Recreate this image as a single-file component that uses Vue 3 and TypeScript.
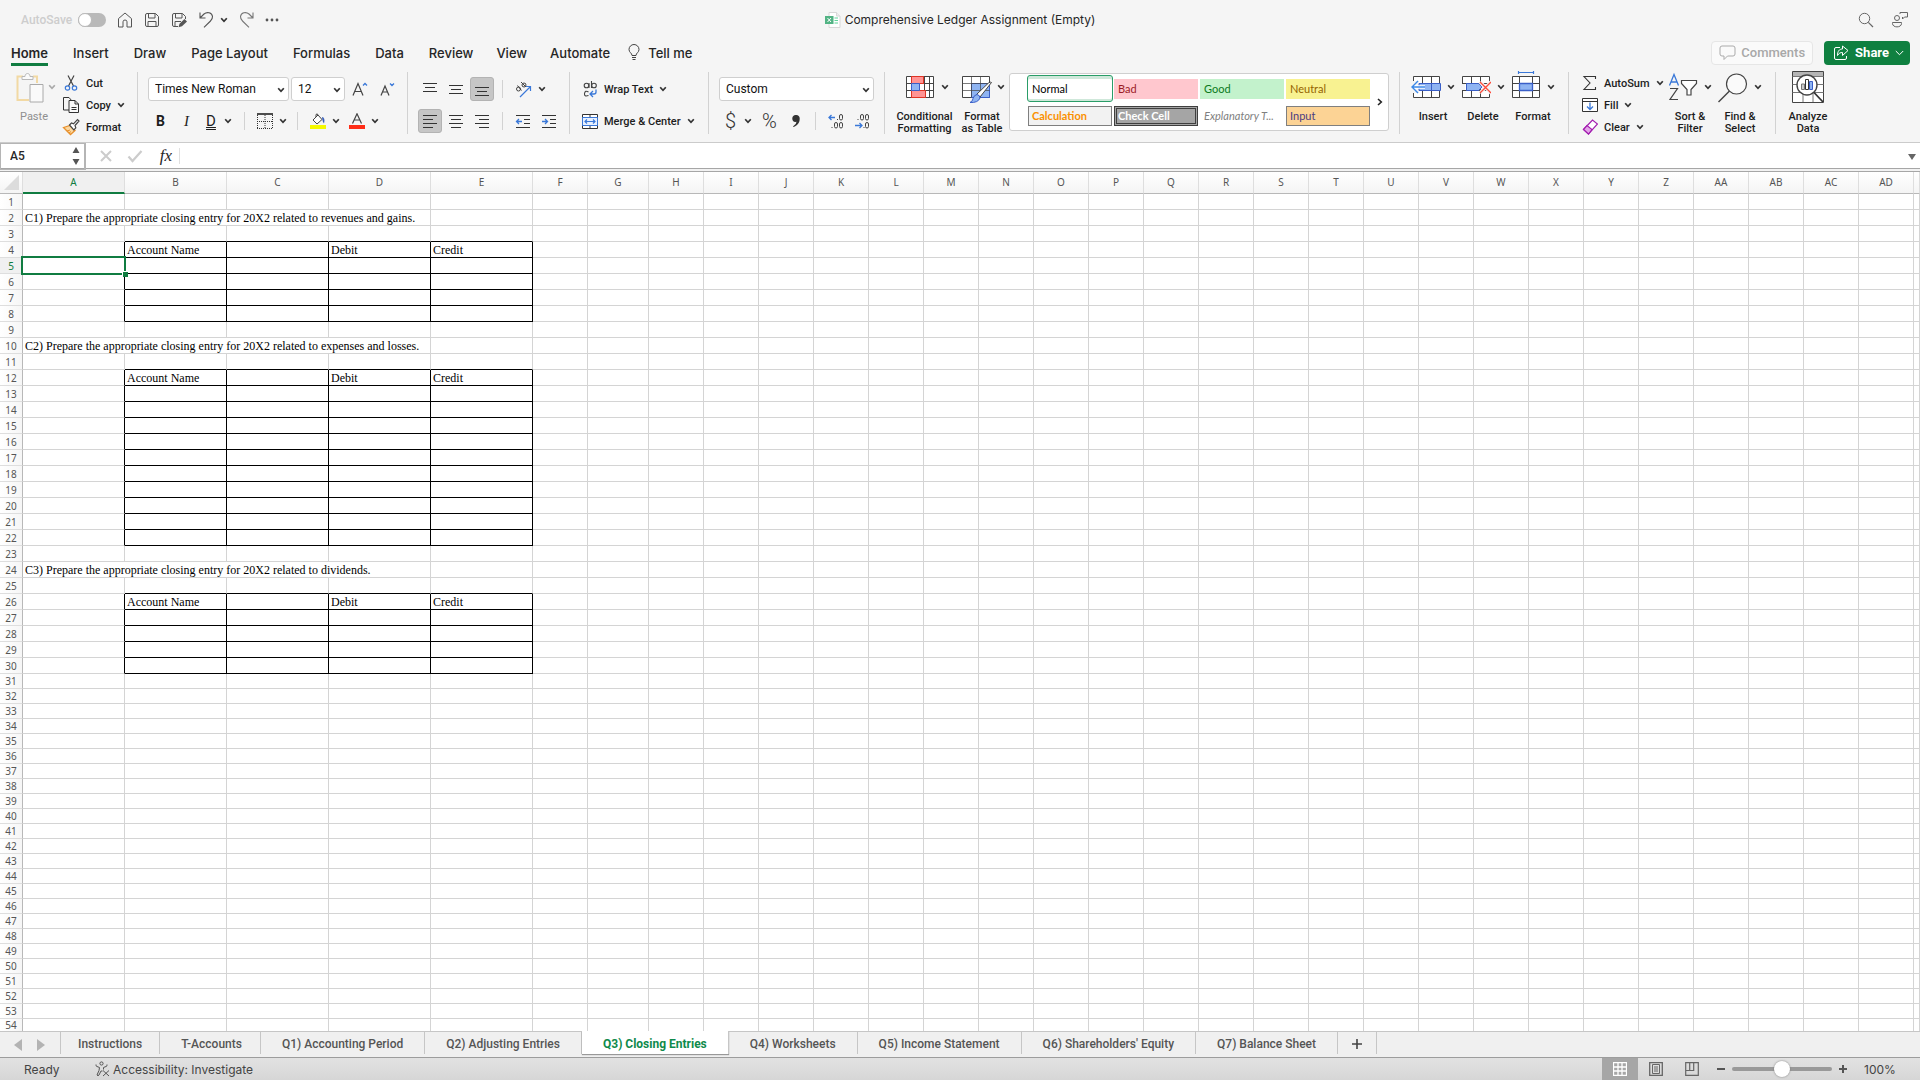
<script setup lang="ts">
import { h, ref } from 'vue'

const Chevron = () =>
  h('svg', { class: 'chev', width: 8, height: 6, viewBox: '0 0 8 6', 'aria-hidden': 'true' }, [
    h('path', { d: 'M1.2 1.2 4 4.3 6.8 1.2', fill: 'none', stroke: 'currentColor', 'stroke-width': 1.7 }),
  ])

const menus = ['Home', 'Insert', 'Draw', 'Page Layout', 'Formulas', 'Data', 'Review', 'View', 'Automate']

const cellStyles = [
  { name: 'Normal', cls: 'normal' },
  { name: 'Bad', cls: 'bad' },
  { name: 'Good', cls: 'good' },
  { name: 'Neutral', cls: 'neutral' },
  { name: 'Calculation', cls: 'calculation' },
  { name: 'Check Cell', cls: 'check-cell' },
  { name: 'Explanatory T...', cls: 'explanatory' },
  { name: 'Input', cls: 'input-style' },
]

const sheets = [
  'Instructions',
  'T-Accounts',
  'Q1) Accounting Period',
  'Q2) Adjusting Entries',
  'Q3) Closing Entries',
  'Q4) Worksheets',
  'Q5) Income Statement',
  "Q6) Shareholders' Equity",
  'Q7) Balance Sheet',
]
const activeSheet = ref('Q3) Closing Entries')

function columnName(i: number): string {
  return i < 26 ? String.fromCharCode(65 + i) : 'A' + String.fromCharCode(65 + i - 26)
}
const columns = Array.from({ length: 31 }, (_, i) => columnName(i))

function columnClass(i: number): string {
  if (i < 5) return 'col-wide'
  if (i === 6) return 'col-mid'
  return i < 30 ? 'col-std' : 'col-rest'
}

const prompts: Record<number, string> = {
  2: 'C1) Prepare the appropriate closing entry for 20X2 related to revenues and gains.',
  10: 'C2) Prepare the appropriate closing entry for 20X2 related to expenses and losses.',
  24: 'C3) Prepare the appropriate closing entry for 20X2 related to dividends.',
}
const tables: [number, number][] = [[4, 8], [12, 22], [26, 30]]
const headings: Record<number, string> = { 1: 'Account Name', 3: 'Debit', 4: 'Credit' }

interface Cell {
  key: string
  span: number
  text: string
  inkRight: boolean
  inkBottom: boolean
  selected: boolean
}

const inTable = (r: number) => tables.some(([a, b]) => r >= a && r <= b)
const isHeading = (r: number) => tables.some(([a]) => a === r)

function buildRow(r: number): Cell[] {
  const cells: Cell[] = []
  for (let c = 0; c < columns.length; c++) {
    const span = c === 0 && prompts[r] ? 4 : 1
    cells.push({
      key: columns[c] + r,
      span,
      text: c === 0 ? prompts[r] ?? '' : isHeading(r) ? headings[c] ?? '' : '',
      inkRight: inTable(r) && c <= 4,
      inkBottom: c >= 1 && c <= 4 && (inTable(r) || inTable(r + 1)),
      selected: r === 5 && c === 0,
    })
    c += span - 1
  }
  return cells
}
const rows = Array.from({ length: 54 }, (_, i) => ({ n: i + 1, cells: buildRow(i + 1) }))

const zoomLevel = ref(50)
</script>

<template>
  <div class="app">
    <header class="titlebar">
      <div class="quick">
        <label class="autosave">AutoSave <input type="checkbox" role="switch" disabled /></label>
        <button class="q home" aria-label="Home">
          <svg width="16" height="16" viewBox="0 0 16 16"><path d="M1.5 6.6 8 1l6.5 5.6V15H10V9.8Q10 8 8 8T6 9.8V15H1.5Z" fill="none" stroke="#555" stroke-linejoin="round" /></svg>
        </button>
        <button class="q" aria-label="Save">
          <svg width="16" height="16" viewBox="0 0 16 16"><path d="M3 1.5h8.5l3 3V13a1.5 1.5 0 0 1-1.5 1.5H3A1.5 1.5 0 0 1 1.5 13V3A1.5 1.5 0 0 1 3 1.5ZM4.500 1.500V6h6.500V1.500M4 14.500V9.500h8v5" fill="none" stroke="#555" /></svg>
        </button>
        <button class="q" aria-label="Save as">
          <svg width="17" height="16" viewBox="0 0 17 16"><path d="M7 14.500H3A1.500 1.500 0 0 1 1.500 13V3A1.500 1.500 0 0 1 3 1.500h8.500l3 3V7M4.500 1.500V6h6.500V1.500M4 14.500V9.500h6" fill="none" stroke="#555" /><path d="m7.500 15.200 1-3.500 5-4.700 2.500 2.500-5 4.700Z" fill="#555" /></svg>
        </button>
        <button class="q undo" aria-label="Undo">
          <svg width="15" height="17" viewBox="0 0 15 17"><path d="M1 1.500V7h5.500M1.500 6.500 5 3C8 .5 13 1.500 13.500 5.500c.2 2-.7 3-2 4.500L5 16.300" fill="none" stroke="#555" stroke-width="1.100" /></svg>
          <Chevron />
        </button>
        <button class="q" aria-label="Redo">
          <svg width="15" height="17" viewBox="0 0 15 17"><path d="M14 1.500V7H8.500M13.500 6.500 10 3C7 .5 2 1.500 1.500 5.500c-.2 2 .7 3 2 4.500l6.500 6.300" fill="none" stroke="#777" stroke-width="1.100" /></svg>
        </button>
        <button class="q" aria-label="More">
          <svg width="14" height="4" viewBox="0 0 14 4"><g fill="#555"><circle cx="2" cy="2" r="1.400" /><circle cx="7" cy="2" r="1.400" /><circle cx="12" cy="2" r="1.400" /></g></svg>
        </button>
      </div>
      <h1 class="doc">
        <svg width="16" height="16" viewBox="0 0 16 16"><path d="M4 .5h7.500L15 4v11.500H4Z" fill="#fff" stroke="#d8d8d8" /><path d="M11.500.5V4H15" fill="#eee" stroke="#d8d8d8" /><path d="M9.500 6h3.500M9.500 8.500h3.500M9.500 11h3.500" stroke="#5fd39a" /><rect y="4" width="8.500" height="8" fill="#52b384" /><path d="m2.500 6 3.500 4M6 6l-3.500 4" stroke="#fff" /></svg>
        Comprehensive Ledger Assignment (Empty)
      </h1>
      <div class="title-right">
        <button class="q" aria-label="Search">
          <svg width="16" height="16" viewBox="0 0 16 16"><circle cx="6.500" cy="6.500" r="5.200" fill="none" stroke="#666" /><path d="m10.300 10.300 4.700 4.700" stroke="#666" stroke-width="1.200" /></svg>
        </button>
        <button class="q" aria-label="Presence">
          <svg width="18" height="17" viewBox="0 0 18 17"><g fill="none" stroke="#666"><circle cx="6" cy="7" r="2.500" /><path d="M1.500 11.500h9v1c0 4.500-9 4.500-9 0ZM9 3V1.500h7.500V6h-3l-2 2V6" stroke-linejoin="round" /></g></svg>
        </button>
      </div>
    </header>

    <nav class="menubar" aria-label="Ribbon tabs">
      <a v-for="m in menus" :key="m" href="#" :class="{ active: m === 'Home' }">{{ m }}</a>
      <button class="tellme">
        <svg width="12" height="17" viewBox="0 0 12 17"><g fill="none" stroke="#444"><path d="M4 11.500C4 9 1 8.500 1 5.500a5 5 0 0 1 10 0C11 8.500 8 9 8 11.500ZM4 13.500h4M4.500 15.500h3" /></g></svg>
        Tell me
      </button>
      <span class="grow"></span>
      <button class="comments" disabled>
        <svg width="17" height="16" viewBox="0 0 17 16"><path d="M3 1h11a2 2 0 0 1 2 2v6a2 2 0 0 1-2 2H8.500L5 14.500V11H3a2 2 0 0 1-2-2V3a2 2 0 0 1 2-2Z" fill="none" stroke="#aaa" stroke-linejoin="round" /></svg>
        Comments
      </button>
      <button class="share">
        <svg width="16" height="16" viewBox="0 0 16 16"><g fill="none" stroke="#fff" stroke-linejoin="round"><path d="M7 2.500H3A1.500 1.500 0 0 0 1.500 4v9A1.500 1.500 0 0 0 3 14.500h9a1.500 1.500 0 0 0 1.500-1.500v-2" /><path d="M9.500 1v3C6 4 4.500 6.500 4.500 10.500 6 8 7.500 7.500 9.500 7.500v3L15 5.500Z" /></g></svg>
        Share
        <svg width="9" height="6" viewBox="0 0 9 6"><path d="m.8 1 3.700 3.700L8.200 1" fill="none" stroke="#fff" /></svg>
      </button>
    </nav>

    <div class="ribbon" role="toolbar">
      <section class="group g-clip">
        <button class="big paste" disabled>
          <span class="pic"><svg width="28" height="31" viewBox="0 0 28 31"><path d="M7 4.500H1.500V28H13M17 4.500h4V11" fill="none" stroke="#f2d9a4" stroke-width="2" /><path d="M6 7.500V4.500h3c0-4 5-4 5 0h3v3Z" fill="#fafafa" stroke="#b8b8b8" /><path d="M14 12.500h13v17.500H14Z" fill="#fafafa" stroke="#aaa" /></svg><Chevron /></span>
          <span>Paste</span>
        </button>
        <div class="stack">
          <button>
            <svg width="18" height="18" viewBox="0 0 18 18"><path d="M6 1.500 11.500 12M12 1.500 6.500 12" stroke="#444" stroke-width="1.200" /><g fill="none" stroke="#3a78d8" stroke-width="1.200"><circle cx="5.500" cy="14" r="2.200" /><circle cx="12.500" cy="14" r="2.200" /></g></svg>
            Cut
          </button>
          <button>
            <svg width="18" height="18" viewBox="0 0 18 18"><path d="M7 14H1.500V1.500H7L10 5" fill="none" stroke="#333" /><path d="M7 4.500h6l3.500 3.500v8.500H7ZM13 4.500V8h3.500M9.500 11.500h5M9.500 13.500h5" fill="#fafafa" stroke="#333" /></svg>
            Copy <Chevron />
          </button>
          <button>
            <svg width="18" height="18" viewBox="0 0 18 18"><path d="m1.500 9.500 6.500-2 5 5-4.500 4Z" fill="#fbd7a0" stroke="#e8912d" stroke-width="1.300" /><path d="m5 13 3-1M7 15l2-1.500" stroke="#e8912d" /><path d="m7.500 7 2-2 2 .8L15.500 1.500l1.500 1.500L13 7.500l.8 2.300-2 2Z" fill="#fff" stroke="#444" stroke-width="1.200" /></svg>
            Format
          </button>
        </div>
      </section>
      <i class="sep"></i>

      <section class="group g-font">
        <div class="line">
          <span class="pick font-name"><select aria-label="Font"><option>Times New Roman</option></select><Chevron /></span>
          <span class="pick font-size"><select aria-label="Font size"><option>12</option></select><Chevron /></span>
          <button class="grow-font" aria-label="Increase font size"><svg width="16" height="16" viewBox="0 0 16 16"><path d="M1 14.500 6 2.500l5 12M2.800 10.500h6.400" fill="none" stroke="#444" stroke-width="1.200" /><path d="m11 4.500 2-2 2 2" fill="none" stroke="#3a78d8" stroke-width="1.300" /></svg></button>
          <button class="shrink-font" aria-label="Decrease font size"><svg width="16" height="16" viewBox="0 0 16 16"><path d="M1 14.500 5 5l4 9.500M2.500 11h5" fill="none" stroke="#444" stroke-width="1.200" /><path d="m10 2.500 2 2 2-2" fill="none" stroke="#3a78d8" stroke-width="1.300" /></svg></button>
        </div>
        <div class="line low">
          <button class="letter bold">B</button>
          <button class="letter ital">I</button>
          <button class="letter dbl">D <Chevron /></button>
          <i class="minisep"></i>
          <button class="pic-btn" aria-label="Borders"><svg width="16" height="16" viewBox="0 0 16 16"><path d="M0 1h16" stroke="#222" stroke-width="1.600" /><path d="M.5 2v14M15.500 2v14M0 15.500h16M8 2v14M0 8.500h16" fill="none" stroke="#333" stroke-dasharray="1 1" /></svg><Chevron /></button>
          <i class="minisep"></i>
          <button class="pic-btn" aria-label="Fill colour"><svg width="16" height="16" viewBox="0 0 16 16"><path d="m3 7 5-5 4 4.500-5 4.500ZM6 4V1.500q1.500-1.500 2 .5" fill="#fff" stroke="#444" /><path d="M12 4q3.500.5 2 6.500Q12.500 9 12 4Z" fill="#3a5fb8" /><path d="M0 12h16v4H0Z" fill="#f5f900" /></svg><Chevron /></button>
          <button class="pic-btn" aria-label="Font colour"><svg width="16" height="16" viewBox="0 0 16 16"><path d="M3.500 10.500 8 .8l4.500 9.700M5.200 7h5.600" fill="none" stroke="#444" stroke-width="1.200" /><path d="M0 12h16v4H0Z" fill="#ff2d17" /></svg><Chevron /></button>
        </div>
      </section>
      <i class="sep"></i>

      <section class="group g-align">
        <div class="line">
          <button class="tile" aria-label="Top align"><svg width="14" height="16" viewBox="0 0 14 16"><path d="M0 2.500h14M2 6.500h10M0 10.500h14" stroke="#333" /></svg></button>
          <button class="tile" aria-label="Middle align"><svg width="14" height="16" viewBox="0 0 14 16"><path d="M0 4.500h14M2 8.500h10M0 12.500h14" stroke="#333" /></svg></button>
          <button class="tile on" aria-label="Bottom align"><svg width="14" height="16" viewBox="0 0 14 16"><path d="M0 6.500h14M2 10.500h10M0 14.500h14" stroke="#333" /></svg></button>
          <i class="minisep"></i>
          <button class="pic-btn" aria-label="Orientation"><svg width="17" height="17" viewBox="0 0 17 17"><g fill="none" stroke="#444"><circle cx="3.500" cy="8" r="2" /><path d="m2.500 4.500 4 5M6 1l5 5" /><circle cx="9" cy="4" r="2" /></g><path d="M5 16 15.500 5.500M11 5.500h4.500V10" fill="none" stroke="#3a78d8" stroke-width="1.200" /></svg><Chevron /></button>
        </div>
        <div class="line low">
          <button class="tile on" aria-label="Align left"><svg width="14" height="16" viewBox="0 0 14 16"><path d="M0 2.500h14M0 6.500h10M0 10.500h14M0 14.500h10" stroke="#333" /></svg></button>
          <button class="tile" aria-label="Centre"><svg width="14" height="16" viewBox="0 0 14 16"><path d="M0 2.500h14M2 6.500h10M0 10.500h14M2 14.500h10" stroke="#333" /></svg></button>
          <button class="tile" aria-label="Align right"><svg width="14" height="16" viewBox="0 0 14 16"><path d="M0 2.500h14M4 6.500h10M0 10.500h14M4 14.500h10" stroke="#333" /></svg></button>
          <i class="minisep"></i>
          <button class="tile" aria-label="Decrease indent"><svg width="16" height="16" viewBox="0 0 16 16"><path d="M1 2.500h14M9 6.500h6M9 10.500h6M1 14.500h14" stroke="#333" /><path d="M7 8.500H1.500M4 6 1.500 8.500 4 11" fill="none" stroke="#3a78d8" stroke-width="1.300" /></svg></button>
          <button class="tile" aria-label="Increase indent"><svg width="16" height="16" viewBox="0 0 16 16"><path d="M1 2.500h14M9 6.500h6M9 10.500h6M1 14.500h14" stroke="#333" /><path d="M1 8.500h5.500M4 6l2.500 2.500L4 11" fill="none" stroke="#3a78d8" stroke-width="1.300" /></svg></button>
        </div>
      </section>
      <i class="sep"></i>

      <section class="group g-wrap">
        <div class="line">
          <button class="wide">
            <svg width="16" height="18" viewBox="0 0 16 18"><g fill="none" stroke="#444" stroke-width="1.100"><circle cx="4.500" cy="5.500" r="2.300" /><path d="M7 3v5M9.500 1v7" /><circle cx="12" cy="5.500" r="2.300" /><path d="M6.500 12q-3.500-2-4 1.500t4 2" /></g><path d="M14 9.500v2.500q0 2-2 2H8.500M11 11l-3 3 3 3" fill="none" stroke="#3a78d8" stroke-width="1.300" /></svg>
            Wrap Text <Chevron />
          </button>
        </div>
        <div class="line low">
          <button class="wide">
            <svg width="16" height="16" viewBox="0 0 16 16"><path d="M.5 1.500h15v14H.5ZM8 1v3M8 13v3" fill="#fff" stroke="#333" /><path d="M.5 4.500h15v8H.5Z" fill="#e8f1ff" stroke="#3a78d8" /><path d="M3 8.500h10M5 6.500l-2 2 2 2M11 6.500l2 2-2 2" fill="none" stroke="#3a78d8" stroke-width="1.200" /></svg>
            Merge &amp; Center <Chevron />
          </button>
        </div>
      </section>
      <i class="sep"></i>

      <section class="group g-num">
        <div class="line">
          <span class="pick number"><select aria-label="Number format"><option>Custom</option></select><Chevron /></span>
        </div>
        <div class="line low">
          <button class="glyph dollar">$ <Chevron /></button>
          <button class="glyph">%</button>
          <button class="glyph comma" aria-label="Comma style"><svg width="8" height="12" viewBox="0 0 8 12"><path d="M4 0a3.500 3.500 0 0 1 3.700 3.800C7.700 8 5 11 1.500 12q-.8-.5 0-1 2.800-1.500 3-4.200Q.4 7.500.3 3.800A3.500 3.500 0 0 1 4 0Z" fill="#333" /></svg></button>
          <i class="minisep"></i>
          <button class="dec" aria-label="Increase decimal"><svg width="16" height="16" viewBox="0 0 16 16"><path d="M7 4.500H1M3.500 2 1 4.500 3.500 7" fill="none" stroke="#3a78d8" stroke-width="1.300" /><g fill="none" stroke="#444"><rect x="11.500" y="1.500" width="3" height="5.500" rx="1.500" /><rect x="6.500" y="9.500" width="3" height="5.500" rx="1.500" /><rect x="11.500" y="9.500" width="3" height="5.500" rx="1.500" /></g><path d="M3.500 14.500h1M9 6.500h1" stroke="#444" /></svg></button>
          <button class="dec" aria-label="Decrease decimal"><svg width="16" height="16" viewBox="0 0 16 16"><path d="M1 12.500h7M5.500 10 8 12.500 5.500 15" fill="none" stroke="#3a78d8" stroke-width="1.300" /><g fill="none" stroke="#444"><rect x="6.500" y="1.500" width="3" height="5.500" rx="1.500" /><rect x="11.500" y="1.500" width="3" height="5.500" rx="1.500" /><rect x="11.500" y="9.500" width="3" height="5.500" rx="1.500" /></g><path d="M3.500 6.500h1M9.500 14.500h1" stroke="#444" /></svg></button>
        </div>
      </section>
      <i class="sep"></i>

      <section class="group g-styles">
        <button class="big cond">
          <span class="pic"><svg width="30" height="32" viewBox="0 0 30 32"><path d="M1.500 5.500h27v21h-27ZM1.500 12.500h27M1.500 19.500h27M19.500 5.500v21M24.500 5.500v21" fill="#fff" stroke="#444" /><path d="M6.500 5.500h12v7h-12ZM6.500 19.500h14v7h-14Z" fill="#ff9494" stroke="#e03424" /><path d="M6.500 12.500h8v7h-8Z" fill="#8fb4f2" stroke="#3a5fc8" /></svg><Chevron /></span>
          <span>Conditional<br />Formatting</span>
        </button>
        <button class="big as-table">
          <span class="pic"><svg width="32" height="32" viewBox="0 0 32 32"><path d="M1.500 5.500h27v21h-27Z" fill="#fff" stroke="#444" /><path d="M10.500 12.500h18v14h-18Z" fill="#8fb4f2" stroke="#3a5fc8" /><path d="M1.500 12.500h27M1.500 19.500h27M10.500 5.500v21M19.500 5.500v21" stroke="#444" stroke-opacity=".7" /><path d="M30.500 11.500 19 26l-3.500-2.500L27.500 12q2-1.500 3-.5Z" fill="#fff" stroke="#444" /><path d="M16 23.500q3 .5 3 3.500-2 5-10 4.500 3-1.500 3-4 1-3.500 4-4Z" fill="#8fb4f2" stroke="#3a5fc8" /></svg><Chevron /></span>
          <span>Format<br />as Table</span>
        </button>
        <div class="gallery">
          <div class="swatches">
            <button v-for="s in cellStyles" :key="s.name" :class="['swatch', s.cls]">{{ s.name }}</button>
          </div>
          <button class="next" aria-label="More styles"><svg width="6" height="8" viewBox="0 0 6 8"><path d="m1 1 3.300 3L1 7" fill="none" stroke="#222" stroke-width="1.600" /></svg></button>
        </div>
      </section>
      <i class="sep"></i>

      <section class="group g-cells">
        <button class="big">
          <span class="pic"><svg width="30" height="32" viewBox="0 0 30 32"><path d="M2.500 5.500h26v21h-26ZM2.500 12.500h26M2.500 19.500h26M11.500 5.500v21M20.500 5.500v21" fill="#fff" stroke="#444" /><path d="M0 10h8v12H0Z" fill="#f5f5f5" /><path d="M8 12.500h21.500v7H8Z" fill="#8fb4f2" stroke="#3a5fc8" /><path d="M20.500 12.500v7" stroke="#3a5fc8" /><path d="M14 16H2" stroke="#fff" stroke-width="3.500" /><path d="M14 16H1M7 10 1 16l6 6" fill="none" stroke="#3a88e8" stroke-width="1.400" /></svg><Chevron /></span>
          <span>Insert</span>
        </button>
        <button class="big">
          <span class="pic"><svg width="30" height="32" viewBox="0 0 30 32"><path d="M1.500 5.500h27v21h-27ZM1.500 12.500h27M1.500 19.500h27M10.500 5.500v21M19.500 5.500v21" fill="#fff" stroke="#444" /><path d="M0 13h4v6H0ZM20 13h10v6H20Z" fill="#f4f4f4" /><path d="M5.500 12.500h12L21 16l-3.500 3.500h-12Z" fill="#8fb4f2" stroke="#3a5fc8" /><path d="m19 11 11 11M30 11 19 22" stroke="#f4f4f4" stroke-width="3.500" /><path d="m19 11 11 11M30 11 19 22" stroke="#ff4a3a" stroke-width="1.300" /></svg><Chevron /></span>
          <span>Delete</span>
        </button>
        <button class="big">
          <span class="pic"><svg width="30" height="32" viewBox="0 0 30 32"><path d="M1.500 5.500h27v21h-27ZM1.500 12.500h27M1.500 19.500h27M8.500 5.500v21M21.500 5.500v21" fill="#fff" stroke="#444" /><path d="M8.500 12.500h13v7h-13Z" fill="#8fb4f2" stroke="#3a5fc8" stroke-width="1.300" /><path d="M7.500 0v3M22.500 0v3M7.500 1.500h15" stroke="#3a78d8" stroke-width="1.200" /></svg><Chevron /></span>
          <span>Format</span>
        </button>
      </section>
      <i class="sep"></i>

      <section class="group g-edit">
        <div class="stack">
          <button>
            <svg width="16" height="18" viewBox="0 0 16 18"><path d="M13.500 5V2.500H2L8 9l-6 6.500h11.500V13" fill="none" stroke="#333" stroke-width="1.100" /></svg>
            AutoSum <Chevron />
          </button>
          <button>
            <svg width="16" height="18" viewBox="0 0 16 18"><path d="M.5 2.500h15v13H.5ZM.5 5.500h15" fill="#fff" stroke="#333" /><path d="M8 6.500V13M5 10.500 8 13.500l3-3" fill="none" stroke="#3a78d8" stroke-width="1.300" /></svg>
            Fill <Chevron />
          </button>
          <button>
            <svg width="16" height="18" viewBox="0 0 16 18"><path d="M1.500 11.500 10.500 2l5 4L6.500 16Z" fill="#fff" stroke="#a21caf" stroke-width="1.200" /><path d="m1.500 11.500 3.500-4 5 4L6.500 16Z" fill="#e3a5e8" stroke="#a21caf" stroke-width="1.200" /></svg>
            Clear <Chevron />
          </button>
        </div>
        <button class="big">
          <span class="pic"><svg width="30" height="32" viewBox="0 0 30 32"><path d="m1.500 14.500 4.500-11 4.500 11M3 11h6" fill="none" stroke="#3a78d8" stroke-width="1.300" /><path d="M2 17.500h7.500L2 28.500h8" fill="none" stroke="#444" stroke-width="1.200" /><path d="M13.500 9.500h15v3l-5.500 6V24h-4v-5.500l-5.500-6Z" fill="#fff" stroke="#444" stroke-width="1.200" /></svg><Chevron /></span>
          <span>Sort &amp;<br />Filter</span>
        </button>
        <button class="big">
          <span class="pic"><svg width="30" height="32" viewBox="0 0 30 32"><circle cx="18.500" cy="13" r="10" fill="#fafafa" stroke="#444" stroke-width="1.200" /><path d="M11.500 20 .5 31" stroke="#444" stroke-width="1.400" /></svg><Chevron /></span>
          <span>Find &amp;<br />Select</span>
        </button>
      </section>
      <i class="sep"></i>

      <section class="group g-analyze">
        <button class="big solo">
          <span class="pic"><svg width="32" height="32" viewBox="0 0 32 32"><path d="M.5.500h31v31H.5Z" fill="#fff" stroke="#444" /><path d="M1 1h30v4H1Z" fill="#b5b5b5" /><path d="M.5 5.500h31M.5 13.500h31M.5 21.500h31M11 5v26M21 5v26" stroke="#777" /><circle cx="15" cy="14" r="10" fill="#fff" stroke="#444" stroke-width="1.400" /><path d="M9.500 13h3v5.500h-3Z" fill="#ccc" stroke="#777" /><path d="M13.500 8.500h3v10h-3Z" fill="#fff" stroke="#333" /><path d="M17.500 10.500h3v8h-3Z" fill="#8fb4f2" stroke="#3a5fc8" /><path d="m22 21.500 9 9.500" stroke="#333" stroke-width="1.800" /></svg></span>
          <span>Analyze<br />Data</span>
        </button>
      </section>
    </div>

    <div class="formula">
      <div class="namebox">
        <input aria-label="Name box" value="A5" />
        <svg width="8" height="18" viewBox="0 0 8 18"><path d="M4 0 7.500 6h-7ZM4 18 .5 12h7Z" fill="#555" /></svg>
      </div>
      <button aria-label="Cancel" class="fb"><svg width="16" height="16" viewBox="0 0 16 16"><path d="m3 3 10 10M13 3 3 13" stroke="#ccc" stroke-width="2" /></svg></button>
      <button aria-label="Enter" class="fb"><svg width="16" height="16" viewBox="0 0 16 16"><path d="m1.500 8.500 4 4.500L14.500 3" fill="none" stroke="#ccc" stroke-width="2.200" /></svg></button>
      <button aria-label="Insert function" class="fb fx">fx</button>
      <input class="entry" aria-label="Formula" />
      <button aria-label="Expand formula bar" class="expand"><svg width="8" height="6" viewBox="0 0 8 6"><path d="M0 0h8L4 6Z" fill="#666" /></svg></button>
    </div>

    <main class="sheet">
      <table>
        <colgroup>
          <col class="col-num" />
          <col v-for="(c, i) in columns" :key="c" :class="columnClass(i)" />
        </colgroup>
        <thead>
          <tr>
            <th class="corner"><svg width="15" height="15" viewBox="0 0 15 15"><path d="M15 0v15H0Z" fill="#dcdcdc" /></svg></th>
            <th v-for="(c, i) in columns" :key="c" :class="{ current: i === 0 }" scope="col">{{ i < 30 ? c : '' }}</th>
          </tr>
        </thead>
        <tbody>
          <tr v-for="r in rows" :key="r.n" :class="{ short: r.n > 30 }">
            <th scope="row" :class="{ current: r.n === 5 }">{{ r.n }}</th>
            <td
              v-for="c in r.cells"
              :key="c.key"
              :colspan="c.span"
              :class="{ 'ink-r': c.inkRight, 'ink-b': c.inkBottom, selected: c.selected }"
            >{{ c.text }}</td>
          </tr>
        </tbody>
      </table>
    </main>

    <nav class="tabs" aria-label="Sheets">
      <div class="arrows">
        <button aria-label="Previous sheet"><svg width="8" height="12" viewBox="0 0 8 12"><path d="M8 0v12L0 6Z" fill="#b3b3b3" /></svg></button>
        <button aria-label="Next sheet"><svg width="8" height="12" viewBox="0 0 8 12"><path d="M0 0v12l8-6Z" fill="#b3b3b3" /></svg></button>
      </div>
      <button v-for="s in sheets" :key="s" :class="['tab', { active: s === activeSheet }]" @click="activeSheet = s">{{ s }}</button>
      <button class="tab add" aria-label="Add sheet"><svg width="10" height="10" viewBox="0 0 10 10"><path d="M5 0v10M0 5h10" stroke="#444" stroke-width="1.600" /></svg></button>
    </nav>

    <footer class="status">
      <span class="ready">Ready</span>
      <button class="access">
        <svg width="15" height="16" viewBox="0 0 15 16"><g fill="none" stroke="#555"><circle cx="6.500" cy="2.500" r="1.600" /><path d="M1 3.500q-.5 1.500 1 2l2.500 1-.5 3-2 4.500q1 1.500 2 0L6 10h1.500M12 3.500q.5 1.500-1 2L8.500 6.500v2" /><path d="m8 9.500 6 5.500M14 9.500 8 15" /></g></svg>
        Accessibility: Investigate
      </button>
      <span class="grow"></span>
      <button class="view on" aria-label="Normal view"><svg width="14" height="14" viewBox="0 0 14 14"><path d="M.5.500h13v13H.5ZM5 0v14M9 0v14M0 5h14M0 9h14" fill="none" stroke="#fff" stroke-width="1.300" /></svg></button>
      <button class="view" aria-label="Page layout view"><svg width="14" height="14" viewBox="0 0 14 14"><path d="M.7.700h12.600v12.600H.7Z" fill="none" stroke="#666" stroke-width="1.300" /><path d="M3.500 2.500h7v9h-7ZM5 5h4M5 7h4M5 9h4" fill="none" stroke="#666" /></svg></button>
      <button class="view" aria-label="Page break view"><svg width="14" height="14" viewBox="0 0 14 14"><path d="M.7.700h12.600v12.600H.7ZM.7 8.500h8V.7M4.700.700v7.800" fill="none" stroke="#666" stroke-width="1.200" /></svg></button>
      <button class="step" aria-label="Zoom out"><svg width="8" height="8" viewBox="0 0 8 8"><path d="M0 4h8" stroke="#555" stroke-width="2" /></svg></button>
      <input v-model="zoomLevel" type="range" min="0" max="100" aria-label="Zoom" />
      <button class="step" aria-label="Zoom in"><svg width="8" height="8" viewBox="0 0 8 8"><path d="M0 4h8M4 0v8" stroke="#555" stroke-width="2" /></svg></button>
      <output class="percent">100%</output>
    </footer>
  </div>
</template>

<style>
html,
body {
  margin: 0;
  background: #fff;
}
</style>

<style scoped>
.app {
  display: flex;
  flex-direction: column;
  height: 100vh;
  overflow: hidden;
  background: #f5f5f5;
  color: #262626;
  font-family: Roboto, 'Liberation Sans', sans-serif;
  font-size: 11px;
}
.app *,
.app *::before,
.app *::after {
  box-sizing: border-box;
}
button,
input,
select {
  margin: 0;
  padding: 0;
  border: 0;
  background: none;
  color: inherit;
  font: inherit;
}
svg {
  display: block;
  flex: none;
}
.chev {
  color: #333;
}
.grow {
  flex: 1;
}

/* Title bar */
.titlebar {
  display: grid;
  grid-template-columns: 1fr auto 1fr;
  align-items: center;
  height: 39px;
}
.quick {
  display: flex;
  align-items: center;
  gap: 11px;
  padding-left: 21px;
}
.autosave {
  display: flex;
  align-items: center;
  gap: 6px;
  color: #cdcdcd;
  font-size: 12px;
  font-weight: 500;
}
.autosave input {
  appearance: none;
  display: flex;
  width: 28px;
  height: 14px;
  border-radius: 7px;
  background: #b9b9b9;
}
.autosave input::before {
  content: '';
  width: 14px;
  height: 14px;
  border: 1px solid #b9b9b9;
  border-radius: 50%;
  background: #fff;
}
.q {
  display: flex;
  align-items: center;
  gap: 6px;
}
.doc {
  display: flex;
  align-items: center;
  gap: 4px;
  margin: 0;
  font-family: Inter, sans-serif;
  font-size: 12px;
  font-weight: 400;
}
.title-right {
  display: flex;
  justify-content: flex-end;
  gap: 17px;
  padding-right: 11px;
}

/* Ribbon tabs */
.menubar {
  display: flex;
  align-items: center;
  height: 27px;
  padding: 0 10px 0 11px;
  font-size: 13px;
  font-weight: 500;
}
.menubar a {
  height: 27px;
  margin-right: 25px;
  border-bottom: 3px solid transparent;
  color: inherit;
  font-family: Inter, sans-serif;
  line-height: 28px;
  text-decoration: none;
}
.menubar a:nth-of-type(n + 7) {
  margin-right: 23px;
}
.menubar a:last-of-type {
  margin-right: 18px;
}
.menubar a.active {
  border-color: #107c41;
  font-weight: 600;
}
.tellme {
  display: flex;
  align-items: center;
  gap: 8px;
}
.menubar .tellme {
  font-family: Inter, sans-serif;
}
.comments,
.share {
  display: flex;
  align-items: center;
  height: 24px;
  border-radius: 4px;
}
.comments {
  gap: 5px;
  margin-right: 11px;
  padding: 0 7px;
  border: 1px solid #e6e6e6;
  background: #fafafa;
  color: #a8a8a8;
}
.share {
  gap: 6px;
  padding: 0 6px 0 9px;
  background: #0f8040;
  color: #fff;
  font-weight: 700;
}

/* Ribbon */
.ribbon {
  display: flex;
  height: 77px;
  border-bottom: 1px solid #cbcbcb;
}
.group {
  flex: none;
}
.sep {
  flex: none;
  width: 1px;
  height: 62px;
  margin-top: 6px;
  background: #d2d2d2;
}
.minisep {
  flex: none;
  width: 1px;
  height: 18px;
  background: #d2d2d2;
}
.ribbon button {
  color: #1d1d1d;
  font-weight: 500;
}
.g-clip,
.g-styles,
.g-cells,
.g-edit,
.g-analyze {
  display: flex;
}
.stack {
  display: flex;
  flex-direction: column;
  padding-top: 6px;
}
.stack button {
  display: flex;
  align-items: center;
  gap: 6px;
  height: 22px;
}
.big {
  display: flex;
  flex-direction: column;
  align-items: center;
  width: 50px;
  line-height: 12px;
  white-space: nowrap;
}
.big .pic {
  display: flex;
  align-items: center;
  gap: 6px;
  height: 45px;
  padding-bottom: 6px;
  padding-top: 3px;
}
.g-clip {
  width: 137px;
}
.g-clip .stack {
  padding-left: 1px;
}
.ribbon .paste {
  align-items: flex-start;
  width: 61px;
  padding-left: 10px;
  color: #8f8f8f;
  font-weight: 400;
}
.g-clip .paste .pic {
  gap: 4px;
  padding-left: 6px;
}
.g-clip .paste .chev {
  color: #aaa;
}
.g-clip .paste > span:last-child {
  padding-left: 10px;
}
.line {
  display: flex;
  align-items: center;
  height: 24px;
  margin-top: 11px;
}
.line.low {
  margin-top: 8px;
}
.line button {
  display: flex;
  align-items: center;
  flex: none;
}
.pick {
  display: flex;
  position: relative;
  height: 24px;
  border: 1px solid #cfcfcf;
  border-radius: 3px;
  background: #fff;
}
.pick select {
  appearance: none;
  width: 100%;
  padding: 0 20px 0 6px;
  color: #111;
  font-size: 12px;
}
.pick .chev {
  position: absolute;
  top: 9px;
  right: 3px;
  pointer-events: none;
}
.g-font {
  width: 269px;
  padding-left: 10px;
}
.font-name {
  width: 141px;
  margin-right: 2px;
}
.font-size {
  width: 54px;
  margin-right: 7px;
}
.grow-font {
  margin-right: 12px;
}
.g-font .low {
  gap: 9px;
  padding-left: 4px;
}
.g-font .minisep {
  margin: 0 3px 0 1px;
}
.letter {
  justify-content: center;
  width: 17px;
  font-size: 15px;
}
.g-font .bold {
  font-size: 14px;
  font-weight: 700;
}
.g-font .ital {
  font-family: 'Liberation Serif', serif;
  font-style: italic;
  font-weight: 400;
}
.g-font .dbl {
  gap: 8px;
  width: 30px;
  font-weight: 400;
  text-decoration: underline double 1px;
}
.pic-btn {
  gap: 6px;
}
.g-align {
  width: 161px;
  padding-left: 10px;
}
.g-align .line {
  gap: 2px;
}
.tile {
  justify-content: center;
  width: 24px;
  height: 24px;
  border-radius: 3px;
}
.tile.on {
  border: 1px solid #b3b3b3;
  background: #c6c6c6;
}
.g-align .minisep {
  margin: 0 6px;
}
.g-align .pic-btn {
  margin-left: 4px;
}
.g-wrap {
  width: 138px;
  padding-left: 12px;
}
.wide {
  gap: 6px;
}
.g-num {
  width: 175px;
  padding-left: 10px;
}
.number {
  width: 155px;
}
.g-num .low {
  gap: 10px;
  padding-left: 6px;
}
.g-num .glyph {
  gap: 8px;
  color: #333;
  font-size: 20px;
  font-weight: 300;
}
.g-num .comma {
  padding: 0 3px 0 5px;
}
.g-num .minisep {
  margin: 0 2px;
}
.g-styles {
  width: 514px;
}
.cond {
  width: 79px;
}
.cond .pic {
  padding-left: 4px;
}
.as-table {
  width: 36px;
}
.as-table .pic {
  gap: 4px;
  padding-left: 2px;
}
.gallery {
  display: flex;
  align-items: center;
  height: 58px;
  margin-top: 7px;
  margin-left: 9px;
  border: 1px solid #cfcfcf;
  border-radius: 3px;
  background: #fff;
}
.swatches {
  display: grid;
  grid-template-columns: repeat(4, 84px);
  gap: 7px 2px;
  padding-left: 18px;
}
.ribbon .swatch {
  height: 20px;
  padding-left: 4px;
  color: #000;
  font-family: Lato, sans-serif;
  font-size: 11px;
  font-weight: 400;
  text-align: left;
}
.ribbon .normal {
  position: relative;
}
.normal::before {
  content: '';
  position: absolute;
  inset: -4px -1px -3px;
  border: 1px solid #2a9d68;
  border-radius: 3px;
  box-shadow: inset 0 3px #cfe8da, inset 0 -2px #cfe8da;
}
.ribbon .bad {
  background: #ffc7ce;
  color: #9c1c26;
}
.ribbon .good {
  background: #c3f2cc;
  color: #0b7a1c;
}
.ribbon .neutral {
  background: #f8f291;
  color: #946300;
}
.ribbon .calculation {
  border: 1px solid #7f7f7f;
  padding-left: 3px;
  background: #f2f2f2;
  color: #fa9000;
  font-weight: 700;
}
.ribbon .check-cell {
  border: 3px double #3f3f3f;
  padding-left: 1px;
  background: #a5a5a5;
  color: #fff;
  font-weight: 700;
}
.ribbon .explanatory {
  color: #7f7f7f;
  font-style: italic;
}
.ribbon .input-style {
  border: 1px solid #7f7f7f;
  padding-left: 3px;
  background: #fcd395;
  color: #4b3b82;
}
.next {
  padding: 0 5px 0 7px;
}
.g-cells {
  width: 168px;
  padding-left: 8px;
}
.g-edit {
  width: 206px;
  padding-left: 13px;
}
.g-edit .stack {
  width: 83px;
}
.g-analyze {
  padding-left: 7px;
}

/* Formula bar */
.formula {
  display: flex;
  align-items: center;
  height: 29px;
  border-bottom: 1px solid #a6a6a6;
  background: #fff;
  box-shadow: inset 0 -2px #f2f2f2, inset 0 -3px #a6a6a6;
}
.namebox {
  display: flex;
  align-items: center;
  justify-content: space-between;
  width: 86px;
  height: 27px;
  margin-bottom: 2px;
  padding: 0 4px 0 9px;
  border: 1px solid #b5b5b5;
  border-right-width: 2px;
}
.namebox input {
  width: 50px;
  font-size: 12px;
  font-weight: 500;
}
.fb {
  margin-bottom: 2px;
  margin-left: 12px;
}
.fb + .fb {
  margin-left: 13px;
}
.formula .fx {
  width: 24px;
  padding-right: 3px;
  border-right: 1px solid #e0e0e0;
  font-family: 'Liberation Serif', serif;
  font-size: 17px;
  font-style: italic;
  line-height: 16px;
}
.entry {
  flex: 1;
  min-width: 0;
  margin-left: 8px;
}
.expand {
  padding: 0 4px;
}

/* Grid */
.sheet {
  flex: 1;
  min-height: 0;
  overflow: hidden;
  background: #fff;
}
table {
  width: 100%;
  border-collapse: separate;
  border-spacing: 0;
  table-layout: fixed;
}
.col-num {
  width: 23px;
}
.col-wide {
  width: 102px;
}
.col-mid {
  width: 61px;
}
.col-std {
  width: 55px;
}
th {
  padding: 0;
  color: #555;
  font-family: 'Noto Sans', sans-serif;
  font-size: 10px;
  font-weight: 400;
  text-align: center;
}
thead th {
  height: 22px;
  padding-bottom: 2px;
  border-right: 1px solid #dedede;
  border-bottom: 1px solid #b8b8b8;
  background: linear-gradient(#fff, #f4f4f4);
  line-height: 18px;
}
thead th.current {
  padding-bottom: 1px;
  border-bottom: 2px solid #107c41;
  background: #f0f0f0;
  color: #107c41;
}
.corner svg {
  margin: 2px 0 0 4px;
}
tbody th {
  border-right: 1px solid #b8b8b8;
  border-bottom: 1px solid #dedede;
  background: linear-gradient(90deg, #fff, #f6f6f6);
  line-height: 14px;
}
tbody th.current {
  background: #f0f0f0;
  color: #107c41;
}
tbody tr {
  height: 16px;
}
tbody tr.short {
  height: 15px;
}
tbody tr:last-child th {
  line-height: 12px;
  vertical-align: top;
}
td {
  height: inherit;
  padding: 0 0 0 2px;
  border-right: 1px solid #d4d4d4;
  border-bottom: 1px solid #d4d4d4;
  color: #000;
  font-family: 'Liberation Serif', 'Times New Roman', serif;
  font-size: 12px;
  line-height: 14px;
  white-space: nowrap;
}
.ink-r {
  border-right-color: #000;
}
.ink-b {
  border-bottom-color: #000;
}
.selected {
  position: relative;
}
.selected::before {
  content: '';
  position: absolute;
  inset: -2px;
  border: 2px solid #107c41;
}
.selected::after {
  content: '';
  position: absolute;
  right: -4px;
  bottom: -4px;
  width: 6px;
  height: 6px;
  border: solid #fff;
  border-width: 1px 0 0 1px;
  background: #107c41;
}

/* Sheet tabs */
.tabs {
  display: flex;
  height: 27px;
  border-top: 1px solid #c6c6c6;
  border-bottom: 1px solid #9d9d9d;
  background: #f0f0f0;
  color: #555;
  font-size: 12px;
  font-weight: 500;
}
.arrows {
  display: flex;
  align-items: center;
  gap: 15px;
  width: 60px;
  height: 22px;
  margin-top: 2px;
  padding-left: 14px;
}
.tab {
  height: 22px;
  padding: 2px 21px 0;
  border-right: 1px solid #c6c6c6;
}
.arrows + .tab {
  padding: 2px 17px 0;
  border-left: 1px solid #c6c6c6;
}
.arrows + .tab + .tab {
  padding-right: 18px;
}
.tab.active {
  height: 23px;
  margin-top: -1px;
  background: #fff;
  box-shadow: 0 1px 1px #999;
  color: #0f8a4c;
  font-weight: 700;
}
.tab.add {
  padding: 2px 14px 0;
}

/* Status bar */
.status {
  display: flex;
  align-items: center;
  height: 22px;
  background: linear-gradient(#e2e2e2, #d6d6d6);
  color: #444;
  font-family: Inter, sans-serif;
  font-size: 12px;
}
.ready {
  width: 95px;
  padding-left: 24px;
}
.access {
  display: flex;
  align-items: center;
  gap: 3px;
}
.view {
  display: flex;
  align-items: center;
  justify-content: center;
  width: 36px;
  height: 22px;
}
.view.on {
  background: #a6a6a6;
}
.step {
  margin: 0 7px;
}
.status input {
  appearance: none;
  width: 100px;
  height: 16px;
}
.status input::-webkit-slider-runnable-track {
  height: 4px;
  border-radius: 2px;
  background: #999;
}
.status input::-webkit-slider-thumb {
  appearance: none;
  width: 16px;
  height: 16px;
  margin-top: -6px;
  border-radius: 50%;
  background: #fff;
  box-shadow: 0 0 2px #777;
}
.percent {
  width: 66px;
  padding-left: 10px;
}
</style>
